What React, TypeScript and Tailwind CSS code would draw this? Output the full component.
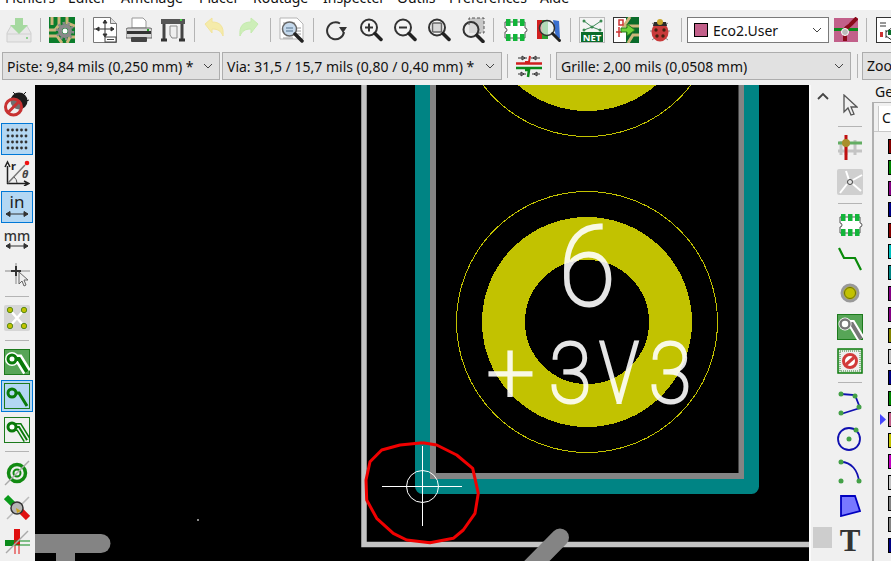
import type { ReactNode } from 'react';

const menus = [
  ['Fichiers', 'w-[63px]'],
  ['Editer', 'w-[53px]'],
  ['Affichage', 'w-[78px]'],
  ['Placer', 'w-[54px]'],
  ['Routage', 'w-[70px]'],
  ['Inspecter', 'w-[74px]'],
  ['Outils', 'w-[52px]'],
  ['Préférences', 'w-[91px]'],
  ['Aide', 'w-[40px]'],
];

const layerColors = [
  '#840000', '#008400', '#840084', '#000084', '#840000', '#00c2c2', '#008484', '#840084', '#840084', '#848400',
  '#c2c2c2', '#000084', '#008400', '#c2608a', '#c2c200', '#c200c2', '#c2c2c2', '#848484', '#848484', '#000084',
];

function Ico({ children, w = 26, h = 26 }: { children: ReactNode; w?: number; h?: number }) {
  return (
    <svg width={w} height={h} viewBox={`0 0 ${w} ${h}`} fill="none">
      {children}
    </svg>
  );
}

function TopBtn({ children, className = '' }: { children: ReactNode; className?: string }) {
  return <div className={`w-[34px] h-[34px] flex items-center justify-center shrink-0 ${className}`}>{children}</div>;
}

function VSep({ className = '' }: { className?: string }) {
  return (
    <div className={`w-[9px] shrink-0 flex justify-center ${className}`}>
      <div className="w-px h-[24px] bg-[#b4b4b4]" />
    </div>
  );
}

function SideBtn({ children, active }: { children: ReactNode; active?: boolean }) {
  return (
    <div className="h-[34px] flex items-center justify-center">
      <div className={`w-[32px] h-[32px] flex items-center justify-center border ${active ? 'bg-[#b3d7f3] border-[#0078d7]' : 'border-transparent'}`}>
        {children}
      </div>
    </div>
  );
}

function HSep() {
  return (
    <div className="h-[9px] flex items-center justify-center">
      <div className="w-[24px] h-px bg-[#b4b4b4]" />
    </div>
  );
}

function Chevron() {
  return (
    <svg width="10" height="6" viewBox="0 0 10 6" fill="none" className="shrink-0">
      <path d="M1 1l4 4 4-4" stroke="#444" strokeWidth="1" />
    </svg>
  );
}

function Combo({ label, className }: { label: string; className: string }) {
  return (
    <div className={`h-[28px] shrink-0 bg-[#e1e1e1] border border-[#adadad] flex items-center justify-between pl-[4px] pr-[6px] ${className}`}>
      <span className="text-[14px] text-[#111] whitespace-nowrap">{label}</span>
      <Chevron />
    </div>
  );
}

function Magnifier({ children }: { children?: ReactNode }) {
  return (
    <Ico w={24} h={26}>
      <circle cx="10" cy="10.5" r="8" stroke="#333" strokeWidth="2" fill="#fff" fillOpacity=".3" />
      <path d="M16 16.5l6 6" stroke="#222" strokeWidth="3.5" strokeLinecap="round" />
      {children}
    </Ico>
  );
}

function Footprint() {
  return (
    <Ico>
      <path d="M3 5h20v6a2 2 0 0 1 0 4v6H3v-6a2 2 0 0 0 0-4z" stroke="#555" fill="#fff" />
      {[4, 11, 18].map((x) => (
        <g key={x}>
          <rect x={x} y="2" width="4.5" height="7" fill="#13b53a" />
          <rect x={x} y="17" width="4.5" height="7" fill="#13b53a" />
        </g>
      ))}
    </Ico>
  );
}

function PadGreen({ variant }: { variant: 'fill' | 'plain' | 'outline' }) {
  const trace = 'M8 10H15L23 23';
  return (
    <Ico>
      <rect x=".5" y=".5" width="25" height="25" stroke="#1c7a1c" fill={variant === 'fill' ? '#57a557' : variant === 'outline' ? '#f0f0f0' : 'none'} />
      {variant === 'fill' && <path d={trace} stroke="#fff" strokeWidth="9" />}
      {variant === 'fill' && <circle cx="8" cy="10" r="7" fill="#fff" />}
      {variant === 'plain' && <path d={trace} stroke="#0a7a0a" strokeWidth="3" />}
      {variant === 'outline' && <path d={trace} stroke="#0a7a0a" strokeWidth="8" />}
      {variant === 'outline' && <path d={trace} stroke="#f0f0f0" strokeWidth="5" />}
      {variant === 'outline' && <path d={trace} stroke="#0a7a0a" strokeWidth="2" />}
      {variant === 'fill' && <path d={trace} stroke="#0a7a0a" strokeWidth="4" />}
      <circle cx="8" cy="10" r="4" stroke="#0a7a0a" strokeWidth="3" fill={variant === 'plain' ? '#b3d7f3' : '#fff'} />
    </Ico>
  );
}

function PcbCanvas() {
  const blob = [
    [422.7, 442.7], [436.7, 445], [456.7, 455], [472.7, 468.3], [478.3, 493.3], [475, 513.3], [463.3, 530], [453.3, 538.3],
    [430, 542.7], [406.7, 540], [393.3, 533.3], [376.7, 518.3], [366.7, 500], [366, 480], [370, 461.7], [381.7, 450], [400, 445], [422.7, 442.7],
  ].map((p) => p.join(',')).join(' ');
  return (
    <svg width="774" height="476" viewBox="35 85 774 476" fill="none" className="block bg-black shrink-0">
      <path d="M364 85V544.500H809" stroke="#c4c4c4" strokeWidth="5.500" />
      <path d="M433 85V476H741.500V85" stroke="#848484" strokeWidth="6" />
      <path d="M422.500 85V486.500H751.500V85" stroke="#008484" strokeWidth="15" strokeLinejoin="round" />
      <path d="M560 537.500L528 570" stroke="#848484" strokeWidth="18" strokeLinecap="round" />
      <path d="M20 543.500H101" stroke="#848484" strokeWidth="19" strokeLinecap="round" />
      <rect x="56" y="550" width="19" height="11" fill="#848484" />
      <rect x="197" y="519" width="2" height="2" fill="#888" />
      <g shapeRendering="crispEdges">
        <circle cx="587" cy="322" r="83.500" stroke="#c2c200" strokeWidth="43" />
        <circle cx="587" cy="322" r="130.500" stroke="#c2c200" />
        <circle cx="587" cy="6" r="83.500" stroke="#c2c200" strokeWidth="43" />
        <circle cx="587" cy="6" r="130.500" stroke="#c2c200" />
      </g>
      <g fill="#fff" stroke="#fff" strokeWidth="3" opacity=".9" style={{ fontFamily: 'Roboto, sans-serif', fontWeight: 100 }}>
        <text transform="translate(559 305) scale(.92 1)" fontSize="112">6</text>
        <text transform="translate(487 402) scale(1 1)" fontSize="84">+</text>
        <text transform="translate(549 402) scale(.92 1)" fontSize="84">3</text>
        <text transform="translate(600 402) scale(.76 1)" fontSize="84" strokeWidth="4">V</text>
        <text transform="translate(649 402) scale(.92 1)" fontSize="84">3</text>
      </g>
      <g stroke="#fff">
        <path d="M382 486.500H462M422.500 446V526" />
        <circle cx="422.500" cy="486.500" r="16" />
      </g>
      <polyline points={blob} stroke="#f00000" strokeWidth="3" strokeLinejoin="round" />
    </svg>
  );
}

export default function App() {
  return (
    <div className="w-[891px] h-[561px] overflow-hidden flex flex-col bg-[#f0f0f0] font-['Noto_Sans',sans-serif] text-[#111]">
      <div className="h-[10px] bg-white overflow-hidden shrink-0">
        <div className="flex pl-[5px] -mt-[14px] text-[14px] leading-[24px]">
          {menus.map(([m, w]) => (
            <span key={m} className={`${w} shrink-0`}>{m}</span>
          ))}
        </div>
      </div>

      <div className="h-[40px] shrink-0 flex items-center pl-[2px] overflow-hidden">
        <TopBtn>
          <Ico>
            <path d="M1 16l4-7h16l4 7v9H1z" fill="#e8e8e8" stroke="#cfcfcf" />
            <path d="M1 17h24" stroke="#d0d0d0" />
            <path d="M9 1h8v7h5l-9 9-9-9h5z" fill="#a6d9a0" />
            <rect x="20" y="20" width="2" height="2" fill="#8fd08f" />
          </Ico>
        </TopBtn>
        <VSep />
        <TopBtn>
          <Ico>
            <rect width="26" height="26" fill="#0b7d2c" />
            <path d="M0 19h8l5 7M0 13h6l4-5V0M18 0v6l8 3M18 26l3-6h5M3 0v8" stroke="#cdb67b" strokeWidth="3" />
            <circle cx="16" cy="14" r="5" stroke="#8a8a8a" strokeWidth="4" />
            <circle cx="16" cy="14" r="8" stroke="#8a8a8a" strokeWidth="2.500" strokeDasharray="2.400 2.600" />
            <circle cx="16" cy="14" r="2.500" fill="#fff" />
          </Ico>
        </TopBtn>
        <VSep />
        <TopBtn>
          <Ico w={24}>
            <path d="M.5.5h17l6 6v19H.5z" fill="#fff" stroke="#777" />
            <path d="M17.500.5v6h6" fill="#ddd" stroke="#777" />
            <path d="M12 3v14M1 12h20M12 3l-2 3h4zM12 20l-2-3h4zM3 12l3-2v4zM21 12l-3-2v4z" stroke="#333" fill="#333" />
            <rect x="12" y="20" width="11" height="5" fill="#fff" stroke="#444" />
            <path d="M14 22.500h7" stroke="#444" />
          </Ico>
        </TopBtn>
        <TopBtn>
          <Ico>
            <path d="M6 11V1h11l3 3v7z" fill="#fff" stroke="#999" />
            <path d="M2 11h22a2 2 0 0 1 2 2v8H0v-8a2 2 0 0 1 2-2z" fill="#d8d8d8" stroke="#666" />
            <rect x="1" y="14" width="24" height="3" fill="#333" />
            <rect x="5" y="20" width="16" height="5" rx="1" fill="#444" />
            <rect x="21" y="12" width="2" height="2" fill="#2ba02b" />
          </Ico>
        </TopBtn>
        <TopBtn>
          <Ico w={24}>
            <path d="M0 2h24v5H0z" fill="#555" />
            <rect x="19" y="2" width="2" height="2" fill="#45d045" />
            <path d="M3 7v15M21 7v15" stroke="#444" strokeWidth="3" />
            <path d="M0 23h6M18 23h6" stroke="#333" strokeWidth="3" />
            <path d="M9 9h7v12H11l-2-3z" fill="#eee" stroke="#888" />
          </Ico>
        </TopBtn>
        <VSep />
        <TopBtn className="-ml-[2px]">
          <Ico w={22}>
            <path d="M2 7l7-6v4c8 0 12 4 11 14-2-5-5-7-11-7v4z" fill="#f5ebaa" stroke="#f2e49b" />
          </Ico>
        </TopBtn>
        <TopBtn className="ml-[1px]">
          <Ico w={22}>
            <path d="M2 7l7-6v4c8 0 12 4 11 14-2-5-5-7-11-7v4z" fill="#cdeeb8" stroke="#c4ebad" transform="translate(22 0) scale(-1 1)" />
          </Ico>
        </TopBtn>
        <VSep />
        <TopBtn>
          <Ico>
            <path d="M1 1h17l6 6v15H1z" fill="#fff" stroke="#b5b5b5" />
            <path d="M4 6h12M15 11h7M15 14h7M15 17h7M4 21h10" stroke="#9a9a9a" />
            <circle cx="10.500" cy="12" r="7" fill="#c5d9ec" stroke="#666" strokeWidth="1.500" />
            <path d="M7 11h7M7 14h7" stroke="#7a94ac" strokeWidth="1.500" />
            <path d="M16 17l7 7" stroke="#222" strokeWidth="3.500" strokeLinecap="round" />
          </Ico>
        </TopBtn>
        <VSep />
        <TopBtn className="ml-[1px]">
          <Ico w={22} h={22}>
            <path d="M15 4.500A8.500 8.500 0 1 0 19 13" stroke="#333" strokeWidth="2" />
            <path d="M14 8h8l-4 6z" fill="#333" />
          </Ico>
        </TopBtn>
        <TopBtn className="ml-[1px]">
          <Magnifier>
            <path d="M6 10.500h8M10 6.500v8" stroke="#333" strokeWidth="2" />
          </Magnifier>
        </TopBtn>
        <TopBtn>
          <Magnifier>
            <path d="M6 10.500h8" stroke="#333" strokeWidth="2" />
          </Magnifier>
        </TopBtn>
        <TopBtn>
          <Magnifier>
            <rect x="5.500" y="6" width="9" height="9" rx="1" stroke="#666" strokeWidth="1.500" fill="#d8d8d8" />
          </Magnifier>
        </TopBtn>
        <TopBtn>
          <Ico w={24}>
            <rect x="8" y="1" width="15" height="15" fill="#c8c8c8" />
            <circle cx="10" cy="12.500" r="7.500" stroke="#333" strokeWidth="2" fill="#e8e8e8" fillOpacity=".5" />
            <path d="M8 8V1h15v15h-7" stroke="#555" strokeDasharray="3 2" />
            <path d="M16 18.500l6 6" stroke="#222" strokeWidth="3.500" strokeLinecap="round" />
          </Ico>
        </TopBtn>
        <VSep className="-ml-[1px]" />
        <TopBtn>
          <Footprint />
        </TopBtn>
        <TopBtn>
          <Ico>
            <rect x="1" y="3" width="5" height="19" fill="#d02020" />
            <rect x="6" y="3" width="6" height="19" fill="#2fa02f" />
            <path d="M17 3l6 1 1 17h-4z" fill="#3a70d0" />
            <circle cx="11" cy="11" r="7.500" fill="#e8f2f2" fillOpacity=".7" stroke="#333" strokeWidth="1.500" />
            <path d="M16.500 16.500l7 7" stroke="#222" strokeWidth="3" strokeLinecap="round" />
          </Ico>
        </TopBtn>
        <VSep />
        <TopBtn>
          <Ico>
            <rect x=".5" y=".5" width="25" height="25" fill="#f4f4f4" stroke="#bbb" />
            <path d="M5 4l8 6 9-6M5 13l8-3 8 3" stroke="#3f8a5a" />
            <circle cx="5" cy="4" r="1.500" fill="#3a8a50" />
            <circle cx="22" cy="4" r="1.500" fill="#3a8a50" />
            <circle cx="13" cy="10" r="1.500" fill="#3a8a50" />
            <circle cx="5" cy="13" r="1.500" fill="#3a8a50" />
            <circle cx="21" cy="13" r="1.500" fill="#3a8a50" />
            <rect x="2" y="15" width="22" height="10" fill="#0a6b2a" />
            <text x="13" y="24" textAnchor="middle" fontSize="9.500" fontWeight="700" fill="#fff">NET</text>
          </Ico>
        </TopBtn>
        <TopBtn>
          <Ico>
            <rect x=".5" y=".5" width="25" height="25" fill="#fff" stroke="#333" />
            <path d="M13 0h13v26H13z" fill="#0a6b2a" />
            <path d="M17 0l-6 9h15M15 26l5-8h6" stroke="#cdb67b" strokeWidth="3" />
            <path d="M3 15h6M6 10v10M6 3h4v5H6z" stroke="#c33" strokeWidth="1.500" />
            <path d="M8 11h6V7l8 6-8 6v-4H8z" fill="#6fd23a" stroke="#2a7a1a" />
          </Ico>
        </TopBtn>
        <TopBtn>
          <Ico w={22}>
            <path d="M3 6l4 3M19 6l-4 3M1 14h4M21 14h-4M3 23l4-3M19 23l-4-3" stroke="#888" />
            <ellipse cx="11" cy="15" rx="8.500" ry="9.500" fill="#c83a3a" />
            <path d="M5 5h12l1 4H4z" fill="#2b2b2b" />
            <circle cx="11" cy="5" r="3" fill="#c9a82c" />
            <circle cx="7" cy="13" r="1.700" fill="#421" />
            <circle cx="15" cy="13" r="1.700" fill="#421" />
            <circle cx="8" cy="19" r="1.700" fill="#421" />
            <circle cx="14" cy="19" r="1.700" fill="#421" />
          </Ico>
        </TopBtn>
        <VSep />
        <div className="ml-[1px] w-[142px] h-[26px] shrink-0 bg-white border border-[#7a7a7a] flex items-center justify-between pl-[6px] pr-[6px]">
          <div className="flex items-center gap-[5px]">
            <div className="w-[14px] h-[14px] bg-[#c2608a] border border-black" />
            <span className="text-[14px]">Eco2.User</span>
          </div>
          <Chevron />
        </div>
        <TopBtn>
          <Ico w={24}>
            <rect width="24" height="24" y="1" fill="#c2608a" />
            <path d="M0 12.500h24" stroke="#0a8a1a" strokeWidth="3" />
            <path d="M11 24V14c0-4 4-4 6-7l6-6" stroke="#8a0a1a" strokeWidth="4" />
            <circle cx="11" cy="15" r="3.500" fill="#bbb" stroke="#fff" />
          </Ico>
        </TopBtn>
        <VSep className="-ml-[1px]" />
        <div className="ml-[5px] w-[24px] h-[26px] shrink-0 bg-white border border-[#333] overflow-hidden">
          <Ico w={16} h={24}>
            <path d="M3 5h6M3 8h6M9 12v8M9 14l7-5M9 18l7 5" stroke="#333" />
            <rect x="11" y="12" width="5" height="5" fill="#0a6b2a" />
            <rect x="3" y="14" width="3" height="5" fill="#c33" />
          </Ico>
        </div>
      </div>

      <div className="h-[35px] shrink-0 flex items-start pt-[2px] pl-[2px] overflow-hidden">
        <Combo label="Piste: 9,84 mils (0,250 mm) *" className="w-[218px]" />
        <Combo label="Via: 31,5 / 15,7 mils (0,80 / 0,40 mm) *" className="ml-[2px] w-[280px]" />
        <VSep className="mt-[2px] ml-[1px]" />
        <div className="w-[34px] h-[28px] shrink-0 flex items-center justify-center">
          <Ico h={26}>
            <path d="M2 5h9M15 5h9M9 5l-3-2v4zM17 5l3-2v4z" stroke="#333" />
            <path d="M14 3l-1 6h-4" stroke="#d02020" strokeWidth="2" />
            <path d="M0 10.500h26" stroke="#d02020" strokeWidth="2.500" />
            <path d="M0 15h26" stroke="#0a8a1a" strokeWidth="2.500" />
            <path d="M9 17h4l-1 7" stroke="#0a8a1a" strokeWidth="2.500" />
            <path d="M2 21h8M16 21h8M8 21l-3-2v4zM18 21l3-2v4z" stroke="#333" />
          </Ico>
        </div>
        <VSep className="mt-[2px]" />
        <Combo label="Grille: 2,00 mils (0,0508 mm)" className="ml-[1px] w-[295px]" />
        <VSep className="mt-[2px] ml-[2px]" />
        <div className="h-[28px] w-[40px] shrink-0 bg-[#e1e1e1] border border-[#adadad] pl-[4px] text-[14px] leading-[26px] whitespace-nowrap">Zoom</div>
      </div>

      <div className="flex-1 min-h-0 flex">
        <div className="w-[35px] shrink-0 pt-[3px] pr-[2px]">
          <SideBtn>
            <Ico>
              <circle cx="15" cy="9" r="8.500" fill="#1c1c1c" />
              <path d="M9 0l3 3M22 0l-3 3M25 8l-3 1" stroke="#1c1c1c" />
              <circle cx="9.500" cy="15" r="8" fill="#f0f0f0" fillOpacity=".4" stroke="#c83232" strokeWidth="3" />
              <path d="M4 20.500L15 9.500" stroke="#c83232" strokeWidth="3" />
            </Ico>
          </SideBtn>
          <SideBtn active>
            <Ico w={22} h={22}>
              {[3, 9, 15, 21].flatMap((y) =>
                [2, 6.500, 11, 15.500, 20].map((x) => <circle key={`${x}-${y}`} cx={x} cy={y - 1} r="1.400" fill="#333" />),
              )}
            </Ico>
          </SideBtn>
          <SideBtn>
            <Ico>
              <path d="M3.500 24V6M1 7l2.500-5L6 7" stroke="#222" strokeWidth="1.500" />
              <path d="M3 23.500h22M20 21l5 2.500-5 2.500" stroke="#222" strokeWidth="1.500" />
              <path d="M4 23L21 5" stroke="#777" strokeWidth="1.500" />
              <path d="M10 17a8 8 0 0 1 3 6" stroke="#555" />
              <circle cx="23" cy="3" r="2.300" fill="#f01010" />
              <text x="7" y="10" fontSize="11" fontWeight="700" fill="#222">r</text>
              <text x="18" y="18" fontSize="11" fontWeight="700" fill="#444" fontStyle="italic">θ</text>
            </Ico>
          </SideBtn>
          <SideBtn active>
            <Ico>
              <text x="13" y="14" textAnchor="middle" fontSize="17" fill="#222">in</text>
              <path d="M2 20h22M6 17.500L2 20l4 2.500zM20 17.500l4 2.500-4 2.500z" stroke="#333" fill="#333" />
            </Ico>
          </SideBtn>
          <SideBtn>
            <Ico>
              <text x="13" y="13" textAnchor="middle" fontSize="14" fill="#333" fontWeight="500">mm</text>
              <path d="M2 18h22M6 15.500L2 18l4 2.500zM20 15.500l4 2.500-4 2.500z" stroke="#333" fill="#333" />
            </Ico>
          </SideBtn>
          <SideBtn>
            <Ico>
              <path d="M12 1v21M1 9h26" stroke="#aaa" strokeWidth="1.500" />
              <path d="M12 4v10M7 9h10" stroke="#333" strokeWidth="2" />
              <path d="M15 10v12l3-3 2 5 2-1-2-5h4z" fill="#eee" stroke="#666" />
            </Ico>
          </SideBtn>
          <HSep />
          <SideBtn>
            <Ico>
              <rect width="26" height="26" rx="2" fill="#d6d6d6" />
              <path d="M6 5l14 16M20 5L6 21" stroke="#fff" strokeWidth="2.500" />
              <circle cx="6" cy="5" r="2.700" fill="#c2c200" stroke="#5a8a1a" />
              <circle cx="20" cy="5" r="2.700" fill="#c2c200" stroke="#5a8a1a" />
              <circle cx="6" cy="21" r="2.700" fill="#c2c200" stroke="#5a8a1a" />
              <circle cx="20" cy="21" r="2.700" fill="#c2c200" stroke="#5a8a1a" />
            </Ico>
          </SideBtn>
          <div className="h-[10px] flex items-center justify-center">
            <div className="w-[24px] h-px bg-[#b4b4b4]" />
          </div>
          <SideBtn>
            <PadGreen variant="fill" />
          </SideBtn>
          <SideBtn active>
            <PadGreen variant="plain" />
          </SideBtn>
          <SideBtn>
            <PadGreen variant="outline" />
          </SideBtn>
          <HSep />
          <SideBtn>
            <Ico>
              <circle cx="13" cy="13" r="8.500" stroke="#128a12" strokeWidth="3.500" />
              <circle cx="13" cy="13" r="3.500" stroke="#128a12" strokeWidth="2" />
              <path d="M1 25L25 1" stroke="#aaa" strokeWidth="1.500" />
            </Ico>
          </SideBtn>
          <SideBtn>
            <Ico>
              <path d="M2 3l9 9" stroke="#0a9a1a" strokeWidth="6" />
              <path d="M15 15l9 9" stroke="#e01010" strokeWidth="6" />
              <path d="M3 25L25 3" stroke="#bbb" strokeWidth="1.500" />
              <circle cx="13" cy="14" r="6" fill="#b5b5b5" stroke="#333" strokeWidth="1.500" />
              <path d="M12 14l5 3-4 2z" fill="#c8a020" />
            </Ico>
          </SideBtn>
          <SideBtn>
            <Ico>
              <rect x="10" y="1" width="6" height="16" fill="#e01010" />
              <path d="M11 17v9M15 17v9" stroke="#e01010" />
              <rect x="1" y="12" width="9" height="6" fill="#0a8a1a" />
              <path d="M10 13h16M10 17h16" stroke="#0a8a1a" />
              <path d="M2 25L24 3" stroke="#aaa" strokeWidth="1.500" />
            </Ico>
          </SideBtn>
        </div>

        <PcbCanvas />

        <div className="w-[23px] shrink-0 flex flex-col items-center pl-[2px] border-l-2 border-[#fafafa]">
          <svg width="12" height="8" viewBox="0 0 12 8" fill="none" className="mt-[7px] shrink-0">
            <path d="M1 7l5-5 5 5" stroke="#444" strokeWidth="1.800" />
          </svg>
          <div className="mt-auto mb-[13px] w-[19px] h-[21px] bg-[#cdcdcd]" />
        </div>

        <div className="w-[36px] shrink-0 pt-[3px] flex flex-col">
          <SideBtn>
            <Ico w={16} h={22}>
              <path d="M2 1v17l4-4 3 7 3-1-3-7h6z" fill="#f0f0f0" stroke="#555" strokeWidth="1.300" />
            </Ico>
          </SideBtn>
          <HSep />
          <SideBtn>
            <Ico>
              <path d="M4 6v14M18 5v15M9 6v14" stroke="#c4c4c4" strokeWidth="3" />
              <path d="M1 16h24" stroke="#c4c4c4" strokeWidth="3" />
              <path d="M1 8h24" stroke="#63ad63" strokeWidth="3" />
              <path d="M9 0v25" stroke="#c01010" strokeWidth="3" />
              <circle cx="9" cy="8" r="4" fill="#a98f2c" />
            </Ico>
          </SideBtn>
          <SideBtn>
            <Ico>
              <rect width="26" height="26" rx="2" fill="#cfcfcf" />
              <path d="M12 11L9 2M16 11L25 6M16 15l8 7M10 15L3 24" stroke="#fff" strokeWidth="2" />
              <circle cx="13" cy="13" r="2.500" stroke="#444" fill="#e6e6e6" />
            </Ico>
          </SideBtn>
          <HSep />
          <SideBtn>
            <Footprint />
          </SideBtn>
          <SideBtn>
            <Ico w={24} h={24}>
              <path d="M1 1l5 10h11l6 12" stroke="#0a8a0a" strokeWidth="2.200" />
            </Ico>
          </SideBtn>
          <SideBtn>
            <Ico w={20} h={20}>
              <circle cx="10" cy="10" r="8" fill="#c2c200" stroke="#999" strokeWidth="3" />
              <circle cx="10" cy="10" r="5.500" stroke="#6a6a10" />
            </Ico>
          </SideBtn>
          <SideBtn>
            <Ico>
              <rect x=".5" y=".5" width="25" height="25" fill="#57a557" stroke="#1c7a1c" />
              <path d="M8 10H15L24 25" stroke="#fff" strokeWidth="8" />
              <path d="M8 10H15L24 25" stroke="#777" strokeWidth="4" />
              <circle cx="8" cy="10" r="6.500" fill="#fff" />
              <circle cx="8" cy="10" r="4.500" stroke="#777" strokeWidth="2.500" fill="#fff" />
            </Ico>
          </SideBtn>
          <SideBtn>
            <Ico>
              <rect x="1" y="1" width="24" height="24" fill="#d8e8d8" stroke="#0a7a0a" strokeWidth="1.500" />
              <rect x="3" y="3" width="20" height="20" fill="#eee" stroke="#8fb88f" strokeDasharray="1 1" strokeWidth="2" />
              <circle cx="13" cy="13" r="6.500" stroke="#d23a3a" strokeWidth="3" fill="#fff" />
              <path d="M9 16.500L17 9.500" stroke="#d23a3a" strokeWidth="3" />
            </Ico>
          </SideBtn>
          <HSep />
          <SideBtn>
            <Ico w={24}>
              <path d="M3 3l14 1 5 13L3 23" stroke="#1010b0" strokeWidth="1.800" />
              <circle cx="3" cy="3" r="2.500" fill="#43a047" />
              <circle cx="17" cy="5" r="2.500" fill="#43a047" />
              <circle cx="21" cy="16" r="2.500" fill="#43a047" />
              <circle cx="3" cy="22" r="2.500" fill="#43a047" />
            </Ico>
          </SideBtn>
          <SideBtn>
            <Ico>
              <circle cx="12" cy="14" r="11" stroke="#1010b0" strokeWidth="1.800" />
              <circle cx="12" cy="14" r="2.500" fill="#43a047" />
              <circle cx="19" cy="5" r="2.500" fill="#43a047" />
            </Ico>
          </SideBtn>
          <SideBtn>
            <Ico w={24}>
              <path d="M3 3c10 0 17 8 18 20" stroke="#1010b0" strokeWidth="1.800" />
              <circle cx="3" cy="3" r="2.500" fill="#43a047" />
              <circle cx="3" cy="22" r="2.500" fill="#43a047" />
              <circle cx="21" cy="22" r="2.500" fill="#43a047" />
            </Ico>
          </SideBtn>
          <SideBtn>
            <Ico w={22} h={22}>
              <path d="M2 1h14l5 15L2 21z" fill="#7878ff" stroke="#0000c0" strokeWidth="1.800" />
            </Ico>
          </SideBtn>
          <SideBtn>
            <div className="font-['Liberation_Serif',serif] text-[31px] leading-none font-bold text-[#333]">T</div>
          </SideBtn>
        </div>

        <div className="flex-1 min-w-0 overflow-hidden flex flex-col pl-[4px]">
          <div className="h-[17px] shrink-0 pl-[3px] text-[14px] leading-[14px] whitespace-nowrap">Ge</div>
          <div className="flex-1 min-h-0 border-l-2 border-t border-[#b0b0b0]">
            <div className="ml-[4px] mt-[3px] h-[25px] bg-white border-l border-[#c8c8c8] pl-[3px] text-[14px] leading-[24px]">C</div>
            <div className="h-px bg-[#c8c8c8]" />
            <div className="pt-[7px] flex flex-col gap-[6px]">
              {layerColors.map((c, i) => (
                <div key={i} className="flex items-center h-[15px] shrink-0">
                  <div className="w-[14px] pl-[6px] shrink-0">
                    {i === 13 && (
                      <svg width="6" height="11" viewBox="0 0 6 11" className="block">
                        <path d="M0 0l6 5.500L0 11z" fill="#4646ff" />
                      </svg>
                    )}
                  </div>
                  <div className="w-[16px] h-[15px] shrink-0 border border-black" style={{ backgroundColor: c }} />
                </div>
              ))}
            </div>
          </div>
        </div>
      </div>
    </div>
  );
}
